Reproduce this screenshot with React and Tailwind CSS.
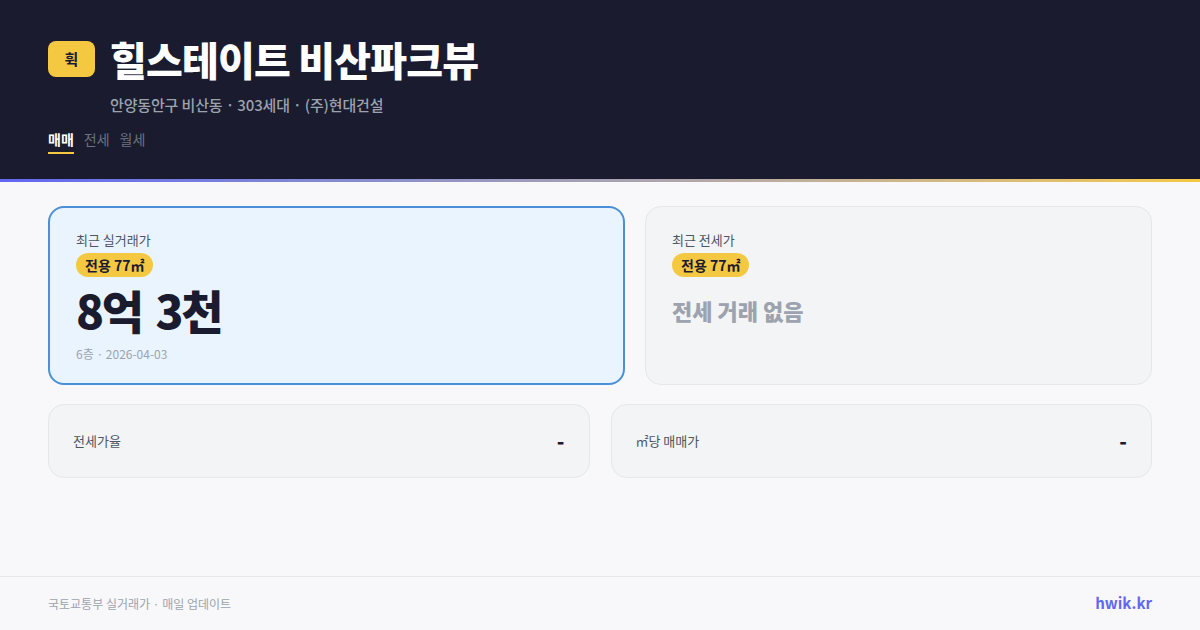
import React from 'react';

const font = { fontFamily: '"Noto Sans CJK KR", "Noto Sans", sans-serif' };

const StatCard = ({ label, value }) => (
  <div className="flex h-[74px] items-center justify-between rounded-2xl border border-[#e5e7eb] bg-[#f3f4f6] px-6">
    <span className="text-[13px] text-[#4b5563]">{label}</span>
    <span className="text-[20px] font-extrabold text-[#1a1b2e]">{value}</span>
  </div>
);

const AreaBadge = () => (
  <span className="inline-block rounded-full bg-[#f5c842] px-[9px] text-[14px] font-bold leading-[24px] text-[#1a1b2e]">
    전용 77㎡
  </span>
);

export default function App() {
  return (
    <div style={font} className="flex h-[630px] w-[1200px] flex-col bg-[#f8f8fa]">
      <header className="h-[179px] bg-[#1a1b2e] px-12 pt-[37px]">
        <div className="flex items-center gap-[15px]">
          <div className="flex h-9 w-[47px] items-center justify-center rounded-lg bg-[#f5c842] text-[15px] font-bold text-[#1a1b2e]">
            휙
          </div>
          <h1 className="text-[40px] font-black leading-[44px] tracking-[-0.02em] text-white">
            힐스테이트 비산파크뷰
          </h1>
        </div>
        <p className="mt-[13px] pl-[62px] text-[15px] font-medium leading-[22px] tracking-[-0.01em] text-[#9ca3af]">
          안양동안구 비산동 · 303세대 · (주)현대건설
        </p>
        <nav className="mt-[13px] flex gap-[10px] text-[14px]">
          <span className="border-b-2 border-[#f5c842] pb-[2px] font-bold text-white">매매</span>
          <span className="text-[#6b7280]">전세</span>
          <span className="text-[#6b7280]">월세</span>
        </nav>
      </header>
      <div className="h-[3px] bg-gradient-to-r from-[#6366f1] to-[#f5c842]" />

      <main className="flex-1 px-12 pt-[24px]">
        <div className="grid grid-cols-[577fr_507fr] gap-5">
          <div className="h-[179px] rounded-2xl border-2 border-[#4a90d9] bg-[#eaf4ff] px-[26px] pt-[22px]">
            <p className="text-[13px] text-[#4b5563]">최근 실거래가</p>
            <div className="mt-[2px]">
              <AreaBadge />
            </div>
            <p className="mt-[3px] text-[46px] font-black leading-[58px] tracking-[-0.05em] text-[#1a1b2e] [word-spacing:0.12em]">
              8억 3천
            </p>
            <p className="mt-[7px] text-[12px] text-[#9ca3af]">6층 · 2026-04-03</p>
          </div>
          <div className="h-[179px] rounded-2xl border border-[#e5e7eb] bg-[#f3f4f6] px-[26px] pt-[23px]">
            <p className="text-[13px] text-[#4b5563]">최근 전세가</p>
            <div className="mt-[2px]">
              <AreaBadge />
            </div>
            <p className="mt-[17px] text-[22px] font-extrabold text-[#9ca3af]">전세 거래 없음</p>
          </div>
        </div>

        <div className="mt-[19px] grid grid-cols-2 gap-[21px]">
          <StatCard label="전세가율" value="-" />
          <StatCard label="㎡당 매매가" value="-" />
        </div>
      </main>

      <footer className="flex h-[54px] items-center justify-between border-t border-[#e5e7eb] px-12">
        <span className="text-[12px] text-[#9ca3af]">국토교통부 실거래가 · 매일 업데이트</span>
        <span className="text-[15px] font-bold text-[#6366f1]">hwik.kr</span>
      </footer>
    </div>
  );
}
